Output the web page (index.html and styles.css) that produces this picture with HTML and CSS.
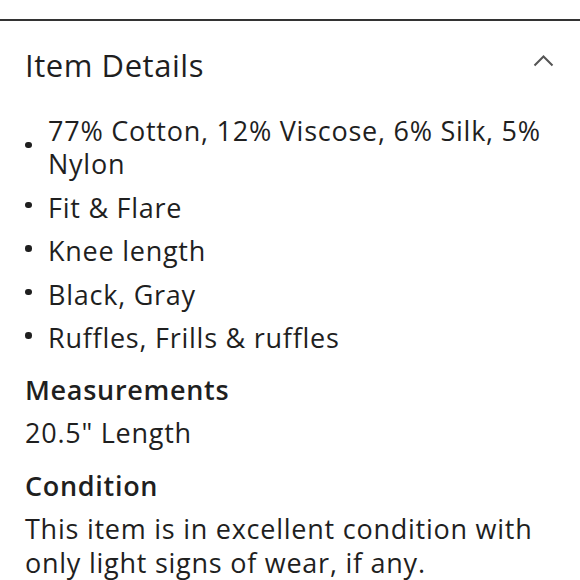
FILE: index.html
```html
<!DOCTYPE html>
<html lang="en">
<head>
<meta charset="utf-8">
<title>Item Details</title>
<link rel="stylesheet" href="styles.css">
</head>
<body>
<div class="rule"></div>
<section class="details">
  <div class="header">
    <h2 class="title">Item Details</h2>
    <svg class="chevron" width="21" height="12" viewBox="0 0 21 12" aria-hidden="true">
      <polyline points="1.5,10.5 10.5,1.5 19.5,10.5" fill="none" stroke="#555" stroke-width="2"/>
    </svg>
  </div>
  <ul class="features">
    <li><span class="dot"></span><span class="text">77% Cotton, 12% Viscose, 6% Silk, 5% Nylon</span></li>
    <li><span class="dot"></span><span class="text">Fit &amp; Flare</span></li>
    <li><span class="dot"></span><span class="text">Knee length</span></li>
    <li><span class="dot"></span><span class="text">Black, Gray</span></li>
    <li><span class="dot"></span><span class="text">Ruffles, Frills &amp; ruffles</span></li>
  </ul>
  <h3 class="subhead">Measurements</h3>
  <p class="body">20.5" Length</p>
  <h3 class="subhead">Condition</h3>
  <p class="body para">This item is in excellent condition with only light signs of wear, if any.</p>
</section>
</body>
</html>
```

FILE: styles.css
```css
html, body {
  margin: 0;
  padding: 0;
  background: #fff;
}
body {
  font-family: "Open Sans", "Liberation Sans", sans-serif;
  color: #1f1f1f;
}
.rule {
  height: 2px;
  margin-top: 19px;
  background: #333;
}
.details {
  padding: 0 26px 0 25px;
}
.header {
  display: flex;
  align-items: center;
  justify-content: space-between;
  margin-top: 26px;
}
.title {
  margin: 0;
  font-size: 31px;
  line-height: 36px;
  font-weight: 400;
  letter-spacing: 0.55px;
}
.chevron {
  display: block;
  margin-bottom: 8px;
}
.features {
  list-style: none;
  margin: 31px 0 0;
  padding: 0;
  display: flex;
  flex-direction: column;
  gap: 10.5px;
}
.features li {
  display: flex;
  align-items: center;
  font-size: 27px;
  line-height: 33px;
  letter-spacing: 0.75px;
}
.dot {
  flex: none;
  width: 6.5px;
  height: 6.5px;
  border-radius: 50%;
  background: #1f1f1f;
  margin: 0 16.5px 4px 0;
}
.subhead {
  margin: 20px 0 10px;
  font-size: 27px;
  line-height: 32px;
  font-weight: 600;
  letter-spacing: 0.7px;
}
.body {
  margin: 0;
  font-size: 27px;
  line-height: 33px;
  letter-spacing: 0.75px;
}
.body + .subhead {
  margin-top: 21px;
}
.para {
  line-height: 34px;
}
```
